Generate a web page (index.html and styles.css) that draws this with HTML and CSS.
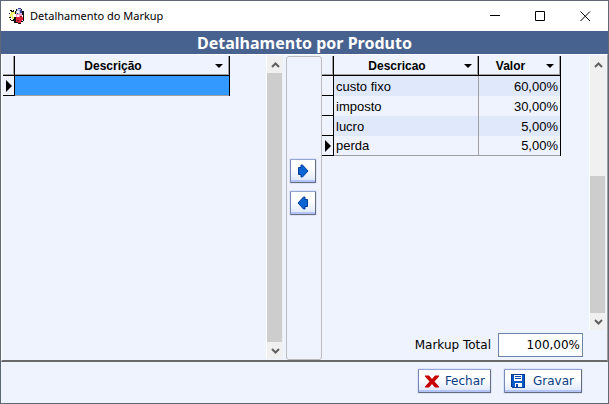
FILE: index.html
```html
<!DOCTYPE html>
<html lang="pt-BR">
<head>
<meta charset="utf-8">
<title>Detalhamento do Markup</title>
<link rel="stylesheet" href="styles.css">
</head>
<body>
<div class="window">
  <header class="titlebar">
    <svg class="app-icon" viewBox="0 0 16 16" shape-rendering="crispEdges" aria-hidden="true">
      <path fill="#111" d="M7 1h1v2H7zM12 1h1v2h-1zM6 3h1v3H6zM13 3h2v8h-1V7h-1zM14 10h1v3h-1zM12 13h2v1h-2zM9 15h3v1H9zM5 12h2v3H5zM4 11h2v2H4zM7 14h3v1H7z"/>
      <path fill="#111" d="M1 2h2v1H1zM2 3h2v1H2zM0 5h1v1H0zM4 2h1v2H4zM0 9h2v1H0zM2 12h2v1H2zM1 11h1v1H1zM5 9h2v3H5z"/>
      <path fill="#b9c4e6" d="M8 1h4v2H8zM7 3h6v3H7z"/>
      <path fill="#3c3c98" d="M9 0h3v1H9zM11 2h2v3h-2zM8 5h1v1H8z"/>
      <path fill="#f4ee6a" d="M2 4h4v3H2zM1 6h3v3H1zM3 9h2v2H3z"/>
      <path fill="#fff" d="M4 6h3v3H4zM8 3h2v2H8z"/>
      <path fill="#f79ac0" d="M7 6h6v3H7z"/>
      <path fill="#e0243a" d="M7 9h7v3h-1v1h-1v2H9v-1H7z"/>
      <path fill="#fff" d="M8 7h2v2H8z"/>
      <path fill="#801830" d="M11 8h2v1h-2zM8 12h2v1H8z"/>
    </svg>
    <h1 class="caption">Detalhamento do Markup</h1>
    <button class="sys" aria-label="Minimizar"><svg viewBox="0 0 11 11"><path d="M0 4.500h10"/></svg></button>
    <button class="sys" aria-label="Maximizar"><svg viewBox="0 0 11 11"><path d="M.5.5h9v9h-9z"/></svg></button>
    <button class="sys" aria-label="Fechar janela"><svg viewBox="0 0 11 11"><path d="M.5.5l9.500 9.500M10 .5l-9.500 9.500"/></svg></button>
  </header>
  <h2 class="banner">Detalhamento por Produto</h2>
  <main class="workspace">
    <section class="pane">
      <div class="list">
        <div class="view">
          <table class="grid grid-left">
            <colgroup><col class="mark"><col></colgroup>
            <thead><tr><th></th><th><button class="sort"><span>Descrição</span><i class="caret"></i></button></th></tr></thead>
            <tbody><tr class="selected"><td><i class="pointer"></i></td><td></td></tr></tbody>
          </table>
        </div>
        <div class="scroll">
          <button class="step" aria-label="Subir"><svg viewBox="0 0 9 6"><path d="M1 5l3.500-3.500L8 5"/></svg></button>
          <div class="track"><div class="thumb"></div></div>
          <button class="step" aria-label="Descer"><svg viewBox="0 0 9 6"><path d="M1 1l3.500 3.500L8 1"/></svg></button>
        </div>
      </div>
    </section>
    <div class="transfer">
      <button class="btn move" aria-label="Adicionar"><svg viewBox="0 0 12 14"><path d="M1.500 3.500h2.500v-2.500h1.500l5.500 6-5.500 6h-1.500v-2.500h-2.500z"/></svg></button>
      <button class="btn move" aria-label="Remover"><svg viewBox="0 0 12 14"><path d="M10.500 3.500h-2.500v-2.500h-1.500l-5.500 6 5.500 6h1.500v-2.500h2.500z"/></svg></button>
    </div>
    <section class="pane pane-right">
      <div class="list">
        <div class="view">
          <table class="grid grid-right">
            <colgroup><col class="mark"><col><col class="value"></colgroup>
            <thead><tr><th></th><th><button class="sort"><span>Descricao</span><i class="caret"></i></button></th><th><button class="sort"><span>Valor</span><i class="caret"></i></button></th></tr></thead>
            <tbody>
              <tr><td></td><td>custo fixo</td><td>60,00%</td></tr>
              <tr><td></td><td>imposto</td><td>30,00%</td></tr>
              <tr><td></td><td>lucro</td><td>5,00%</td></tr>
              <tr><td><i class="pointer"></i></td><td>perda</td><td>5,00%</td></tr>
            </tbody>
          </table>
        </div>
        <div class="scroll">
          <button class="step" aria-label="Subir"><svg viewBox="0 0 9 6"><path d="M1 5l3.500-3.500L8 5"/></svg></button>
          <div class="track track-end"><div class="thumb"></div></div>
          <button class="step" aria-label="Descer"><svg viewBox="0 0 9 6"><path d="M1 1l3.500 3.500L8 1"/></svg></button>
        </div>
      </div>
      <div class="total">
        <label for="total">Markup Total</label>
        <input id="total" type="text" value="100,00%">
      </div>
    </section>
  </main>
  <footer class="actions">
    <button class="btn"><svg class="glyph" viewBox="0 0 14 12"><path fill="#c80000" d="M0 0h4l3 3.500L10 0h4v1L9.500 6l4.500 5v1h-4L7 8.500 4 12H0v-1l4.500-5L0 1z"/></svg><span>Fechar</span></button>
    <button class="btn btn-save"><svg class="glyph" viewBox="0 0 14 14" shape-rendering="crispEdges"><path fill="#0a58c8" stroke="#003a94" d="M.5.5h13v13h-12l-1-1z"/><path fill="#fff" d="M3 1h8v6H3zM4 9h7v4H4z"/><path fill="#0a48a8" d="M4 2h6v1H4zM4 4h6v1H4zM5 10h2v3H5z"/></svg><span>Gravar</span></button>
  </footer>
</div>
</body>
</html>
```
FILE: styles.css
```css
* { box-sizing: border-box; }
body { margin: 0; font: 12px/16px "Liberation Sans", Arial, sans-serif; color: #000; }
button { margin: 0; padding: 0; border: 0; background: none; font: inherit; color: inherit; }
svg { display: block; }

.window {
  display: flex;
  flex-direction: column;
  min-height: 100vh;
  border: 1px solid #5f6875;
  background: #eef3fe;
}

.titlebar { display: flex; align-items: center; height: 30px; padding-left: 8px; background: #fff; }
.app-icon { width: 16px; height: 16px; }
.caption { flex: 1; margin: 0 0 0 5px; font: 11px/16px "Noto Sans", "Open Sans", sans-serif; }
.sys { display: grid; place-items: center; width: 45px; height: 28px; }
.sys svg { width: 11px; height: 11px; fill: none; stroke: #000; }

.banner {
  margin: 0;
  background: #486290;
  color: #fff;
  font: bold 16px/24px "Noto Sans", "DejaVu Sans", sans-serif;
  height: 23px;
  text-align: center;
}

.workspace {
  flex: 1;
  display: grid;
  grid-template-columns: 1fr 36px 1fr;
  padding: 1px 1px 0 0;
  border: 1px solid #fff;
  border-right-color: #a0a0a0;
  border-bottom: 2px solid #696969;
}
.pane { display: flex; flex-direction: column; padding: 0 3px 1px 1px; }
.pane-right { padding: 0 0 3px; }
.list { flex: 1; display: flex; }
.view { flex: 1; }

.scroll { display: flex; flex-direction: column; width: 17px; border: solid #fff; border-width: 0 0 0 1px; background: #f0f0f0; }
.step { display: grid; place-items: center; height: 17px; }
.step svg { width: 9px; height: 6px; fill: none; stroke: #606060; stroke-width: 2; }
.track { flex: 1; display: flex; flex-direction: column; padding-right: 1px; }
.thumb { flex: 1; background: #cdcdcd; }
.track-end { justify-content: flex-end; }
.track-end .thumb { flex: 0 0 57%; }

.grid { table-layout: fixed; border-collapse: separate; border-spacing: 0; border-right: 1px solid #000; }
.grid-left { width: 227px; }
.grid-right { width: 239px; }
.mark { width: 12px; }
.value { width: 81px; }
.grid th { height: 20px; padding: 0; border-right: 1px solid #000; border-bottom: 1px solid #000; box-shadow: inset -1px -1px #a0a0a0; }
.grid td { height: 20px; padding: 1px 2px 0; font-size: 13px; line-height: 16px; border-right: 1px solid #a0a0a0; }
.grid th:last-child, .grid td:last-child { border-right: 0; }
.grid tr td:first-child { padding: 0 0 0 3px; border-right: 1px solid #000; border-bottom: 1px solid #000; background: #eef3fe; }
.grid-right td:last-child { text-align: right; }
.grid-right tbody tr:nth-child(odd) { background: #e0e8fc; }
.grid tbody tr:last-child td:not(:first-child) { border-bottom: 1px solid #a0a0a0; }
.selected { background: #3399ff; }
.sort { display: flex; align-items: center; width: 100%; height: 19px; padding-right: 6px; font-weight: bold; }
.sort span { flex: 1; padding-right: 4px; }
.caret { border: solid transparent; border-width: 4px 4px 0; border-top-color: #000; }
.pointer { display: block; width: 0; border: solid transparent; border-width: 6px 0 6px 6px; border-left-color: #000; }

.transfer {
  display: flex;
  flex-direction: column;
  align-items: center;
  gap: 8px;
  padding-top: 102px;
  padding-right: 3px;
  border: 1px solid #bcbcc0;
  border-radius: 3px;
}
.btn {
  display: flex;
  align-items: center;
  height: 24px;
  border: 1px solid #686c78;
  border-top-color: #96a4d4;
  border-left-color: #7888b4;
  border-radius: 1px;
  background: linear-gradient(#fff 40%, #dce6fe);
  box-shadow: inset 0 -2px #b4c4f8, 0 0 0 1px #dce4fc;
  color: #0a3c82;
  font: 12px/16px "DejaVu Sans", sans-serif;
}
.move { width: 26px; justify-content: center; }
.move svg { width: 12px; height: 14px; fill: #0a64d2; stroke: #003c9c; }

.total { display: flex; justify-content: flex-end; align-items: center; gap: 7px; padding: 3px 23px 0 0; font: 12px/16px "DejaVu Sans", sans-serif; }
.total input {
  width: 85px;
  height: 24px;
  padding: 0 2px;
  border: 1px solid #6c84ac;
  border-radius: 0;
  background: #fff;
  font: inherit;
  text-align: right;
}

.actions { display: flex; justify-content: flex-end; gap: 13px; height: 41px; padding: 7px 26px 0 0; }
.actions .btn { width: 73px; padding: 0 5px 0 6px; justify-content: space-between; }
.actions .btn-save { width: 78px; padding-right: 7px; }
.glyph { width: 14px; height: 13px; }
.btn-save .glyph { height: 14px; }
```
